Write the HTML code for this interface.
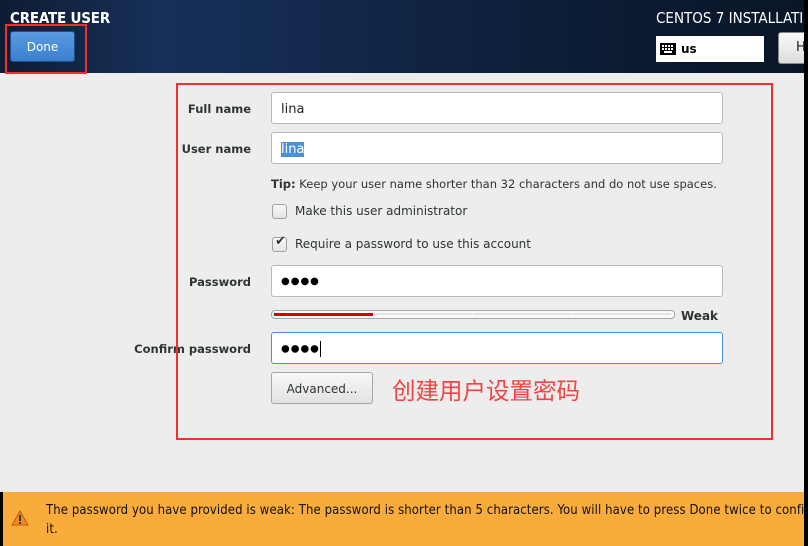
<!DOCTYPE html>
<html><head><meta charset="utf-8"><style>
*{margin:0;padding:0;box-sizing:border-box}
body{width:808px;height:546px;overflow:hidden;background:#ededed;font-family:"DejaVu Sans","Liberation Sans",sans-serif;position:relative;color:#2e3436}
.a{position:absolute}
#hdr{left:0;top:0;width:808px;height:73px;background:linear-gradient(90deg,#0e1c33 0%,#17305a 20%,#102444 50%,#0b1a30 80%,#0a1628 100%)}
.in{position:absolute;left:271px;width:452px;height:32px;background:#fff;border:1px solid #b8bbb6;border-radius:3px;font-size:13px;padding:8px 9px;color:#222}
.lbl{position:absolute;font-size:11.5px;font-weight:bold;color:#2e3436;text-align:right;right:557px}
.cb{position:absolute;left:272px;width:15px;height:15px;border:1px solid #a0a0a0;border-radius:3px;background:linear-gradient(#fafafa,#e3e3e3)}
.t{position:absolute;font-size:12px;color:#2e3436}
.dots{letter-spacing:1px;font-size:10px;color:#000;vertical-align:1px}
</style></head><body>
<div class="a" id="hdr"></div>
<div class="a" style="left:10px;top:9px;color:#fff;font-weight:bold;font-size:15px;font-family:'DejaVu Sans Condensed','DejaVu Sans',sans-serif;letter-spacing:-0.2px">CREATE USER</div>
<div class="a" style="left:10px;top:31px;width:65px;height:31px;background:linear-gradient(#5a9be0,#3a7fd0);border:1px solid #1d4f8a;border-radius:3px;color:#fff;font-size:12px;text-align:center;line-height:30px">Done</div>
<div class="a" style="left:5px;top:24px;width:82px;height:50px;border:2px solid #f0302f"></div>
<div class="a" style="left:656px;top:9px;color:#fff;font-size:15px;white-space:nowrap;font-family:'DejaVu Sans Condensed','DejaVu Sans',sans-serif">CENTOS 7 INSTALLATION</div>
<div class="a" style="left:656px;top:36px;width:108px;height:26px;background:#fff"></div>
<svg class="a" style="left:660px;top:43px" width="16" height="12"><rect width="16" height="12" fill="#000"/><g fill="#fff"><rect x="2" y="2" width="2" height="2"/><rect x="5" y="2" width="2" height="2"/><rect x="8" y="2" width="2" height="2"/><rect x="11" y="2" width="2" height="2"/><rect x="2" y="5" width="2" height="2"/><rect x="5" y="5" width="2" height="2"/><rect x="8" y="5" width="2" height="2"/><rect x="11" y="5" width="2" height="2"/><rect x="4" y="8" width="8" height="2"/></g></svg>
<div class="a" style="left:681px;top:42px;font-size:12px;font-weight:bold;color:#000">us</div>
<div class="a" style="left:778px;top:32px;width:40px;height:32px;background:linear-gradient(#fafafa,#ddd);border:1px solid #888;border-radius:3px;font-size:13px;padding:7px 0 0 17px;color:#222">H</div>
<div class="a" style="left:804px;top:0;width:4px;height:546px;background:#000"></div>

<div class="lbl" style="top:102px">Full name</div>
<div class="in" style="top:92px;padding-top:9px">lina</div>
<div class="lbl" style="top:142px">User name</div>
<div class="in" style="top:132px;padding-top:9px"><span style="background:#4a90d9;color:#fff">lina</span></div>
<div class="t" style="left:271px;top:177px;font-size:11.5px"><b>Tip:</b> Keep your user name shorter than 32 characters and do not use spaces.</div>
<div class="cb" style="top:204px"></div>
<div class="t" style="left:295px;top:204px">Make this user administrator</div>
<div class="cb" style="top:237px"></div>
<div class="a" style="left:275px;top:234px;font-size:13px;color:#333">✔</div>
<div class="t" style="left:295px;top:237px">Require a password to use this account</div>
<div class="lbl" style="top:275px">Password</div>
<div class="in" style="top:265px;padding-top:8px"><span class="dots">●●●●</span></div>
<div class="a" style="left:271px;top:310px;width:404px;height:9px;border:1px solid #a5a5a5;border-radius:4px;background:#fafafa"></div>
<div class="a" style="left:274px;top:313px;width:99px;height:3px;background:#d40000"></div>
<div class="a" style="left:374px;top:313px;width:98px;height:2px;background:#e3e3e3"></div>
<div class="a" style="left:473px;top:313px;width:98px;height:2px;background:#e3e3e3"></div>
<div class="a" style="left:572px;top:313px;width:99px;height:2px;background:#e3e3e3"></div>
<div class="t" style="left:681px;top:309px;font-weight:bold">Weak</div>
<div class="lbl" style="top:342px">Confirm password</div>
<div class="in" style="top:332px;border-color:#4a90d9;padding-top:8px"><span class="dots">●●●●</span><span style="display:inline-block;width:1px;height:16px;background:#000;vertical-align:middle;margin-left:0"></span></div>
<div class="a" style="left:271px;top:372px;width:102px;height:32px;border:1px solid #a5a5a5;border-radius:3px;background:linear-gradient(#f8f8f8,#e2e2e2);font-size:12px;text-align:center;line-height:32px;color:#2e3436">Advanced...</div>
<div class="a" style="left:392px;top:374px;font-size:23.5px;color:#f04545;font-family:'Noto Sans CJK SC',sans-serif;line-height:30px;white-space:nowrap">创建用户设置密码</div>
<div class="a" style="left:176px;top:83px;width:597px;height:357px;border:2px solid #f0302f"></div>

<div class="a" style="left:0;top:492px;width:804px;height:54px;background:#f9ab3b"></div>
<div class="a" style="left:0;top:492px;width:3px;height:54px;background:#000"></div>
<svg class="a" style="left:11px;top:510px" width="18" height="16"><path d="M9 1 L17 15 H1 Z" fill="#f08a1c" stroke="#c05a0a" stroke-width="1"/><rect x="8" y="5" width="2" height="6" fill="#333"/><rect x="8" y="12" width="2" height="2" fill="#333"/></svg>
<div class="a" style="left:46px;top:501px;font-size:13px;letter-spacing:0.1px;color:#111;white-space:nowrap;line-height:19px;font-family:'DejaVu Sans Condensed','DejaVu Sans',sans-serif">The password you have provided is weak: The password is shorter than 5 characters. You will have to press Done twice to confirm<br>it.</div>
</body></html>
